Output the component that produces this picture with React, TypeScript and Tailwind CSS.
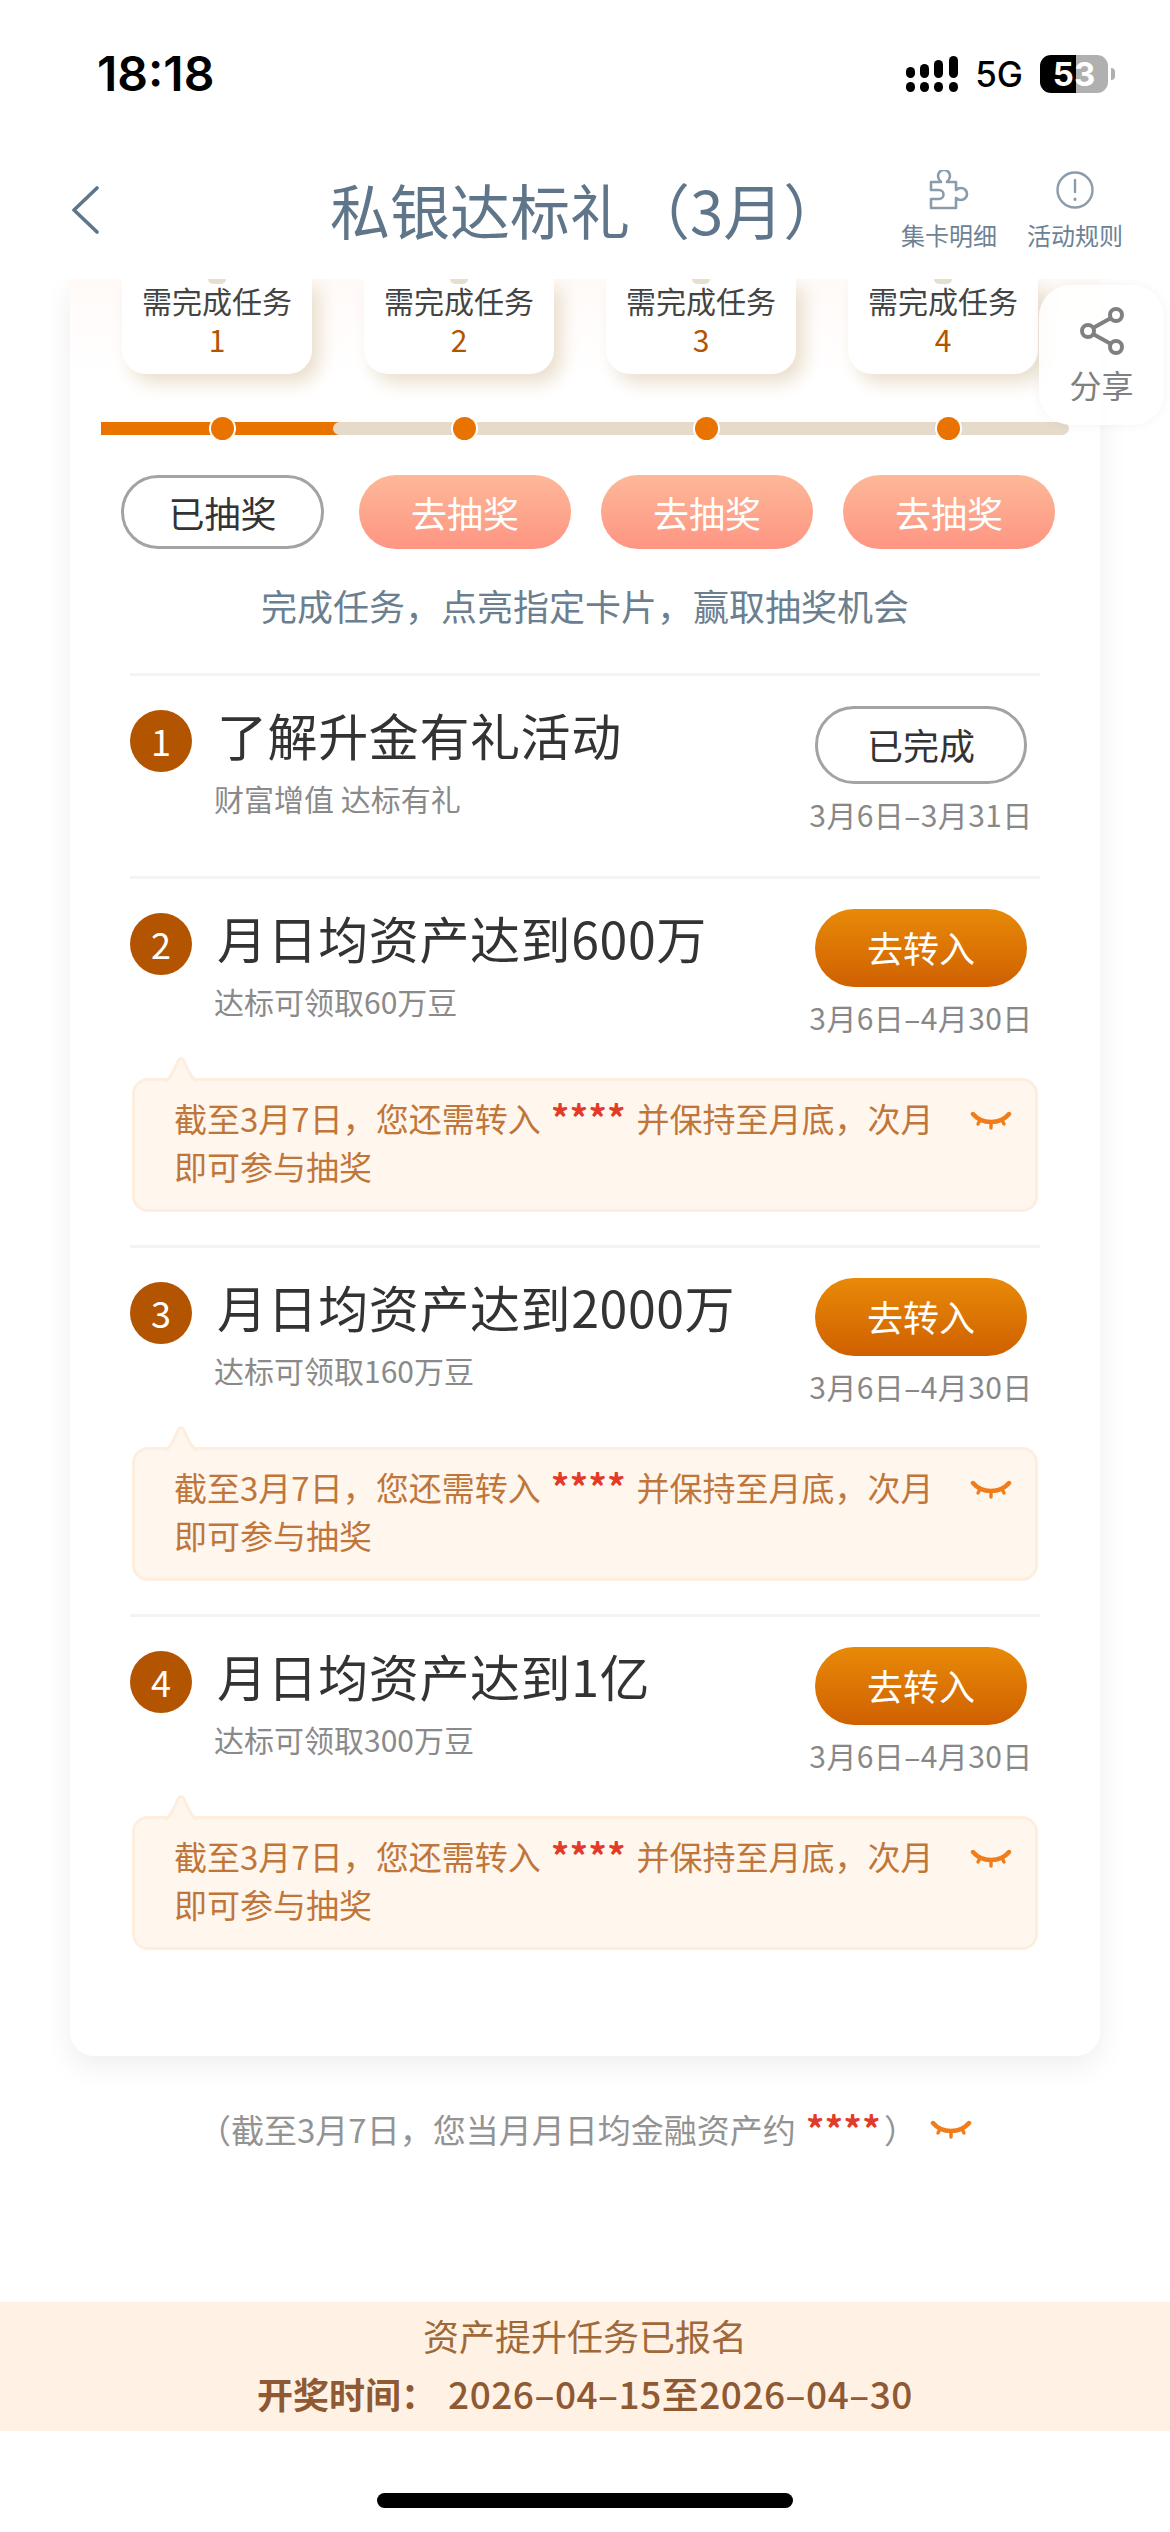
import React from 'react';

const cjk = { fontFamily: '"Noto Sans CJK SC", "Noto Sans", sans-serif' };

const milestones = ['1', '2', '3', '4'];

// closed eye icon next to masked amounts
const EyeClosed = ({ className }: { className: string }) => (
  <svg viewBox="0 0 42 20" className={className} fill="none" stroke="#f07d1a" strokeWidth="4.4" strokeLinecap="round">
    <path d="M3 3c5 6 10 8 18 8s13-2 18-8" />
    <path d="M10 9l-2 4M21 11v6M32 9l2 4" strokeWidth="3.4" />
  </svg>
);

const Stars = () => (
  <span className="mx-[3px] text-[36px] tracking-[0.5px] text-[#e33b2a] font-bold">****</span>
);

const StatusBar = () => (
  <div className="h-[150px] pt-[53px] pl-[97px] pr-[55px] flex items-start justify-between">
    <span className="text-[48px] leading-[41px] font-semibold text-black" style={{ fontFamily: 'Inter, sans-serif' }}>18:18</span>
    <div className="flex items-center gap-[17px] h-[38px] mt-[2px]">
      <svg viewBox="0 0 52 38" className="w-[52px] h-[38px]" fill="#000">
        <rect x="0" y="27" width="9" height="10" rx="4.5" />
        <rect x="14" y="27" width="9" height="10" rx="4.5" />
        <rect x="28" y="27" width="9" height="10" rx="4.5" />
        <rect x="43" y="27" width="9" height="10" rx="4.5" />
        <rect x="0" y="12" width="9" height="11" rx="4.5" />
        <rect x="14" y="9" width="9" height="14" rx="4.5" />
        <rect x="28" y="5" width="9" height="18" rx="4.5" />
        <rect x="43" y="1" width="9" height="22" rx="4.5" />
      </svg>
      <span className="text-[35px] leading-[38px] font-medium text-black" style={{ fontFamily: 'Inter, sans-serif' }}>5G</span>
      <div className="flex items-center gap-[3px]">
        <div className="w-[68px] h-[38px] rounded-[11px] flex items-center justify-center bg-[linear-gradient(90deg,#000_53%,#b0b0b0_53%)]">
          <span className="text-[33px] leading-none font-bold text-white" style={{ fontFamily: 'Inter, sans-serif' }}>53</span>
        </div>
        <div className="w-[4px] h-[12px] rounded-r-full bg-[#b0b0b0]" />
      </div>
    </div>
  </div>
);

const NavBar = () => (
  <div className="h-[129px] pl-[71px] pr-[48px] flex items-start bg-white relative z-10">
    <svg viewBox="0 0 28 48" className="w-[28px] h-[48px] mt-[36px]" fill="none" stroke="#5f7589" strokeWidth="3.6" strokeLinecap="round" strokeLinejoin="round">
      <path d="M26 2L3 24l23 22" />
    </svg>
    <h1 className="ml-[231px] mt-[15px] text-[60px] leading-[88px] text-[#5f7589] whitespace-nowrap" style={cjk}>私银达标礼（3月）</h1>
    <div className="ml-auto flex gap-[32px] mt-[20px]">
      <div className="flex flex-col items-center w-[94px]">
        <svg viewBox="0 0 40 40" className="w-[40px] h-[40px]" fill="none" stroke="#8a9cab" strokeWidth="2.6" strokeLinejoin="round">
          <path d="M2 12h10c-2-2-3-4-3-6a6 6 0 0 1 12 0c0 2-1 4-3 6h9v8c2-2 3-2 5-2a6 6 0 0 1 0 12c-2 0-3 0-5-2v10H2V29h8a4.500 4.500 0 0 0 0-9H2z" />
        </svg>
        <span className="text-[24px] leading-[36px] mt-[7px] text-[#6d8294] whitespace-nowrap" style={cjk}>集卡明细</span>
      </div>
      <div className="flex flex-col items-center w-[94px]">
        <svg viewBox="0 0 40 40" className="w-[40px] h-[40px]" fill="none" stroke="#8a9cab" strokeWidth="2.4" strokeLinecap="round">
          <circle cx="20" cy="20" r="17.500" />
          <path d="M20 10v12" />
          <path d="M20 29v.5" strokeWidth="3" />
        </svg>
        <span className="text-[24px] leading-[36px] mt-[7px] text-[#6d8294] whitespace-nowrap" style={cjk}>活动规则</span>
      </div>
    </div>
  </div>
);

const Tip = () => (
  <div className="relative mb-[33px] ml-[2px] w-[906px] h-[134px] rounded-[16px] bg-[#fff7ee] border-[3px] border-[#fdeee0] pl-[39px] pt-[11px] text-[33px] leading-[48px] text-[#c0763a]">
    <svg viewBox="0 0 36 26" className="absolute left-[28px] -top-[25px] w-[36px] h-[26px]" fill="#fff7ee" stroke="#fdeee0" strokeWidth="3">
      <path d="M1 26C8 24 12 12 15 5Q18 0 21 5C24 12 28 24 35 26" />
    </svg>
    <p className="whitespace-nowrap">
      截至3月7日，您还需转入 <Stars /> 并保持至月底，次月
      <br />
      即可参与抽奖
    </p>
    <EyeClosed className="absolute right-[23px] top-[30px] w-[42px] h-[20px]" />
  </div>
);

type TaskProps = {
  no: string;
  title: string;
  sub: string;
  action: string;
  dates: string;
  done?: boolean;
};

const Task = ({ no, title, sub, action, dates, done }: TaskProps) => (
  <div className="border-t-[3px] border-[#f3f3f3] w-[910px]">
    <div className={`flex items-start ${done ? 'h-[200px]' : 'h-[199px]'}`}>
      <div className="w-[62px] h-[62px] mt-[34px] pb-[2px] rounded-full bg-[#b35400] text-white text-[36px] flex items-center justify-center shrink-0">{no}</div>
      <div className="ml-[25px] mt-[23px] flex-1">
        <div className="text-[50px] leading-[70px] tracking-[0.6px] text-[#333] whitespace-nowrap">{title}</div>
        <div className="-ml-[3px] mt-[8px] text-[30px] leading-[42px] text-[#8a8a8a]">{sub}</div>
      </div>
      <div className="w-[226px] flex flex-col items-center mr-[6px] shrink-0 mt-[30px]">
        {done ? (
          <div className="w-[212px] h-[78px] pb-[3px] rounded-full border-[3px] border-[#a3a3a3] text-[36px] text-[#333] flex items-center justify-center">{action}</div>
        ) : (
          <div className="w-[212px] h-[78px] pb-[3px] rounded-full bg-[linear-gradient(180deg,#e88a08,#cf6000)] text-[36px] text-white flex items-center justify-center">{action}</div>
        )}
        <div className="mt-[9px] text-[30px] leading-[42px] tracking-[0.4px] text-[#888] whitespace-nowrap">{dates}</div>
      </div>
    </div>
    {!done && <Tip />}
  </div>
);

const Milestones = () => (
  <div className="relative">
    {/* faint pink wash behind the cards */}
    <div className="absolute left-0 top-0 w-full h-[95px] bg-[linear-gradient(180deg,#fffaf8,#ffffff)]" />
    <div className="relative flex gap-[52px] pl-[52px]">
      {milestones.map((n) => (
        <div key={n} className="relative w-[190px] h-[95px] bg-white rounded-b-[24px] shadow-[8px_9px_18px_#eadfcd] text-center">
          <div className="absolute left-[86px] top-0 w-[18px] h-[5px] rounded-b-full bg-[#e6dfd0]" />
          <div className="text-[30px] leading-[42px] text-[#444]">需完成任务</div>
          <div className="text-[30px] leading-[36px] text-[#b35400]">{n}</div>
        </div>
      ))}
    </div>
    <div className="relative mt-[48px] ml-[31px] w-[968px] h-[13px] flex">
      <div className="w-[240px] h-full bg-[#e97300]" />
      <div className="relative flex-1 h-full -ml-[8px] rounded-full bg-[#e6dacb]" />
      {milestones.map((n, i) => (
        <div
          key={n}
          className="absolute -top-[5px] w-[23px] h-[23px] rounded-full bg-[#e97300] shadow-[0_0_0_2px_#ffffff]"
          style={{ left: 110 + i * 242 }}
        />
      ))}
    </div>
    <div className="relative flex gap-[30px] mt-[40px] pl-[51px] text-[36px]">
      <div className="w-[203px] h-[74px] mr-[5px] rounded-full border-[3px] border-[#a3a3a3] text-[#333] flex items-center justify-center">已抽奖</div>
      {['b', 'c', 'd'].map((k) => (
        <div key={k} className="w-[212px] h-[74px] rounded-full bg-[linear-gradient(180deg,#fdb898,#fe9583)] text-white flex items-center justify-center">去抽奖</div>
      ))}
    </div>
    <p className="mt-[30px] text-center text-[36px] leading-[52px] text-[#6b7f90]">完成任务，点亮指定卡片，赢取抽奖机会</p>
  </div>
);

const tasks: TaskProps[] = [
  { no: '1', title: '了解升金有礼活动', sub: '财富增值 达标有礼', action: '已完成', dates: '3月6日–3月31日', done: true },
  { no: '2', title: '月日均资产达到600万', sub: '达标可领取60万豆', action: '去转入', dates: '3月6日–4月30日' },
  { no: '3', title: '月日均资产达到2000万', sub: '达标可领取160万豆', action: '去转入', dates: '3月6日–4月30日' },
  { no: '4', title: '月日均资产达到1亿', sub: '达标可领取300万豆', action: '去转入', dates: '3月6日–4月30日' },
];

export default function App() {
  return (
    <div className="relative w-[1170px] h-[2532px] bg-white overflow-hidden flex flex-col" style={cjk}>
      <StatusBar />
      <NavBar />

      {/* Main card */}
      <div className="mx-[70px] w-[1030px] h-[1777px] shrink-0 bg-white rounded-b-[24px] shadow-[0_10px_30px_rgba(0,0,0,0.07)]">
        <Milestones />
        <div className="mt-[42px] ml-[60px]">
          {tasks.map((t) => (
            <Task key={t.no} {...t} />
          ))}
        </div>
      </div>

      {/* Share float */}
      <div className="absolute left-[1039px] top-[285px] w-[125px] h-[140px] rounded-[32px] bg-white/90 shadow-[0_0_12px_rgba(0,0,0,0.05)] flex flex-col items-center">
        <svg viewBox="0 0 44 48" className="w-[44px] h-[48px] mt-[22px]" fill="none" stroke="#808080" strokeWidth="4">
          <circle cx="36" cy="8" r="6" />
          <circle cx="8" cy="24" r="6" />
          <circle cx="36" cy="40" r="6" />
          <path d="M13 21l18-10M13 27l18 10" />
        </svg>
        <span className="text-[32px] leading-[40px] mt-[9px] text-[#808080]">分享</span>
      </div>

      <div className="mt-[49px] h-[44px] shrink-0 pl-[198px] flex items-center text-[33px] text-[#939393] whitespace-nowrap">
        <span>（截至3月7日，您当月月日均金融资产约 <Stars />）</span>
        <EyeClosed className="ml-[13px] mt-[6px] w-[42px] h-[20px]" />
      </div>

      <div className="mt-[153px] h-[129px] shrink-0 bg-[#fff2e5] flex flex-col items-center">
        <div className="mt-[7px] text-[36px] leading-[52px] text-[#a0693a]">资产提升任务已报名</div>
        <div className="mt-[6px] text-[36px] leading-[52px] text-[#8f5a33] whitespace-nowrap">
          <span className="font-bold">开奖时间：</span>
          <span className="font-medium text-[37px] tracking-[0.5px] ml-[11px]">2026–04–15至2026–04–30</span>
        </div>
      </div>

      <div className="mt-[62px] mx-auto w-[416px] h-[15px] shrink-0 rounded-full bg-black" />
    </div>
  );
}
